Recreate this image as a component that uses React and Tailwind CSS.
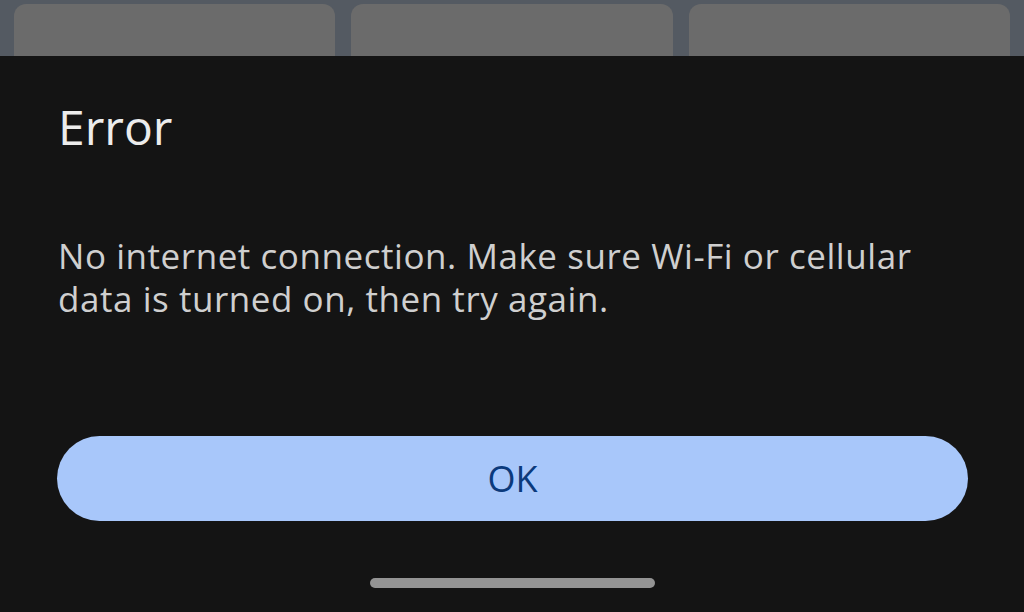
export default function App() {
  return (
    <div className="w-[1024px] h-[612px] flex flex-col overflow-hidden" style={{ fontFamily: "'Open Sans', Roboto, sans-serif" }}>
      <div className="h-[56px] shrink-0 bg-[#545a62] flex gap-[16px] px-[14px] pt-[4px]">
        <div className="flex-1 rounded-t-[12px] bg-[#6b6b6b]" />
        <div className="flex-1 rounded-t-[12px] bg-[#6b6b6b]" />
        <div className="flex-1 rounded-t-[12px] bg-[#6b6b6b]" />
      </div>
      <div className="flex-1 bg-[#141414] flex flex-col pl-[57px] pr-[56px] pt-[47px]">
        <div className="text-[48px] leading-[48px] text-[#ececec] pl-[1px]">Error</div>
        <div className="mt-[83px] text-[35px] leading-[43px] tracking-[0.55px] text-[#cfcfcf] pl-[1px] whitespace-nowrap">
          No internet connection. Make sure Wi-Fi or cellular
          <br />
          data is turned on, then try again.
        </div>
        <button className="mt-[116px] h-[85px] w-full rounded-full bg-[#a8c7fa] text-[#0b3a7c] text-[36px] font-medium flex items-center justify-center">
          OK
        </button>
        <div className="mt-[57px] flex justify-center -ml-[1px]">
          <div className="w-[285px] h-[10px] rounded-full bg-[#949494]" />
        </div>
      </div>
    </div>
  );
}
